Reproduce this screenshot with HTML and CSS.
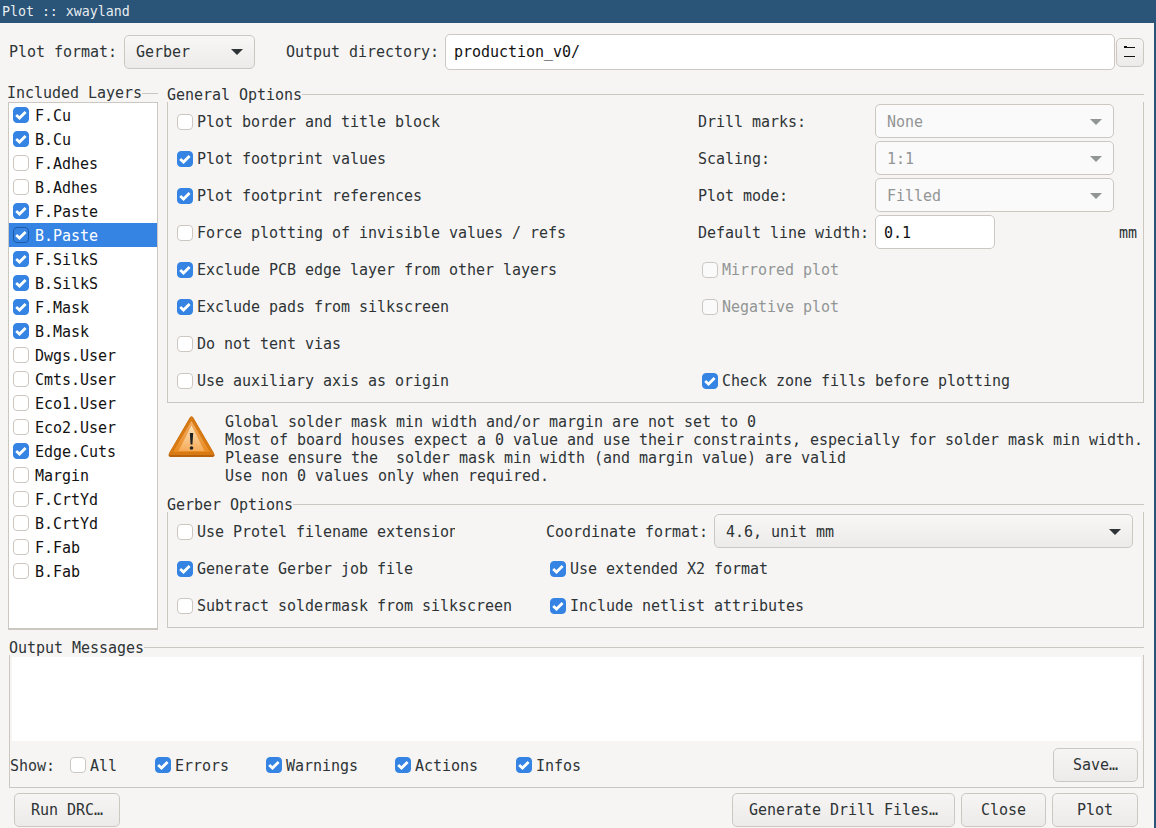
FILE: index.html
```html
<!DOCTYPE html>
<html lang="en">
<head>
    <meta charset="utf-8">
    <title>Plot :: xwayland</title>
    <link rel="stylesheet" href="styles.css">
</head>
<body>
    <div class="window">
        <div class="titlebar">Plot :: xwayland</div>

        <div class="top-row">
            <label>Plot format:</label>
            <div class="combo format-combo"><span>Gerber</span></div>
            <label class="output-label">Output directory:</label>
            <div class="input output-input">production_v0/</div>
            <button class="browse-button" type="button">
                <svg width="14" height="14" viewBox="0 0 14 14">
                    <path d="M1 1.5h3M1 2.5h11M1 11.5h11" fill="none" stroke="#111" stroke-width="1"/>
                </svg>
            </button>
        </div>

        <div class="columns">
            <div class="sidebar">
                <div class="group-title tall">Included Layers</div>
                <div class="layer-list">
                    <label class="layer"><input type="checkbox" checked>F.Cu</label>
                    <label class="layer"><input type="checkbox" checked>B.Cu</label>
                    <label class="layer"><input type="checkbox">F.Adhes</label>
                    <label class="layer"><input type="checkbox">B.Adhes</label>
                    <label class="layer"><input type="checkbox" checked>F.Paste</label>
                    <label class="layer selected"><input type="checkbox" checked>B.Paste</label>
                    <label class="layer"><input type="checkbox" checked>F.SilkS</label>
                    <label class="layer"><input type="checkbox" checked>B.SilkS</label>
                    <label class="layer"><input type="checkbox" checked>F.Mask</label>
                    <label class="layer"><input type="checkbox" checked>B.Mask</label>
                    <label class="layer"><input type="checkbox">Dwgs.User</label>
                    <label class="layer"><input type="checkbox">Cmts.User</label>
                    <label class="layer"><input type="checkbox">Eco1.User</label>
                    <label class="layer"><input type="checkbox">Eco2.User</label>
                    <label class="layer"><input type="checkbox" checked>Edge.Cuts</label>
                    <label class="layer"><input type="checkbox">Margin</label>
                    <label class="layer"><input type="checkbox">F.CrtYd</label>
                    <label class="layer"><input type="checkbox">B.CrtYd</label>
                    <label class="layer"><input type="checkbox">F.Fab</label>
                    <label class="layer"><input type="checkbox">B.Fab</label>
                </div>
            </div>

            <div class="main">
                <div class="group-title">General Options</div>
                <div class="group-body general-grid">
                    <label class="check left"><input type="checkbox">Plot border and title block</label>
                    <label>Drill marks:</label>
                    <div class="combo disabled"><span>None</span></div>
                    <div></div>

                    <label class="check left"><input type="checkbox" checked>Plot footprint values</label>
                    <label>Scaling:</label>
                    <div class="combo disabled"><span>1:1</span></div>
                    <div></div>

                    <label class="check left"><input type="checkbox" checked>Plot footprint references</label>
                    <label>Plot mode:</label>
                    <div class="combo disabled"><span>Filled</span></div>
                    <div></div>

                    <label class="check left"><input type="checkbox">Force plotting of invisible values / refs</label>
                    <label>Default line width:</label>
                    <div class="input width-input">0.1</div>
                    <span class="unit">mm</span>

                    <label class="check left"><input type="checkbox" checked>Exclude PCB edge layer from other layers</label>
                    <label class="check right disabled"><input type="checkbox" disabled>Mirrored plot</label>

                    <label class="check left"><input type="checkbox" checked>Exclude pads from silkscreen</label>
                    <label class="check right disabled"><input type="checkbox" disabled>Negative plot</label>

                    <label class="check left"><input type="checkbox">Do not tent vias</label>

                    <label class="check left"><input type="checkbox">Use auxiliary axis as origin</label>
                    <label class="check right"><input type="checkbox" checked>Check zone fills before plotting</label>
                </div>

                <div class="warning">
                    <svg class="warning-icon" width="47" height="44" viewBox="0 0 47 44">
                        <defs>
                            <linearGradient id="warn-outer" x1="0" y1="0" x2="0" y2="1">
                                <stop offset="0" stop-color="#f3b06a"/>
                                <stop offset="1" stop-color="#e98a1e"/>
                            </linearGradient>
                            <linearGradient id="warn-inner" x1="0" y1="0" x2="0" y2="1">
                                <stop offset="0" stop-color="#fce3bd"/>
                                <stop offset="1" stop-color="#f6ab58"/>
                            </linearGradient>
                        </defs>
                        <path d="M23.5 3 44.5 39.5H2.5Z" fill="#b8620c" stroke="#b8620c" stroke-width="4" stroke-linejoin="round" transform="translate(0 .6)"/>
                        <path d="M23.5 3 44.5 38.5H2.5Z" fill="url(#warn-outer)" stroke="#d87a14" stroke-width="3" stroke-linejoin="round"/>
                        <path d="M23.5 10.5 36.5 36H10.5Z" fill="url(#warn-inner)"/>
                        <path d="M21.8 18h3.4l-.7 11.5h-2Z" fill="#222"/>
                        <circle cx="23.5" cy="33" r="1.8" fill="#222"/>
                    </svg>
                    <div class="warning-text">Global solder mask min width and/or margin are not set to 0
Most of board houses expect a 0 value and use their constraints, especially for solder mask min width.
Please ensure the  solder mask min width (and margin value) are valid
Use non 0 values only when required.</div>
                </div>

                <div class="group-title">Gerber Options</div>
                <div class="group-body gerber-grid">
                    <label class="check left clipped"><input type="checkbox"><span>Use Protel filename extension</span></label>
                    <div class="coord-row">
                        <label>Coordinate format:</label>
                        <div class="combo coord-combo"><span>4.6, unit mm</span></div>
                    </div>
                    <label class="check left"><input type="checkbox" checked>Generate Gerber job file</label>
                    <label class="check right"><input type="checkbox" checked>Use extended X2 format</label>
                    <label class="check left"><input type="checkbox">Subtract soldermask from silkscreen</label>
                    <label class="check right"><input type="checkbox" checked>Include netlist attributes</label>
                </div>
            </div>
        </div>

        <div class="output">
            <div class="group-title">Output Messages</div>
            <div class="group-body output-body">
                <div class="messages"></div>
                <div class="show-row">
                    <label class="show-label">Show:</label>
                    <label class="check show-all"><input type="checkbox">All</label>
                    <label class="check show-errors"><input type="checkbox" checked>Errors</label>
                    <label class="check show-warnings"><input type="checkbox" checked>Warnings</label>
                    <label class="check show-actions"><input type="checkbox" checked>Actions</label>
                    <label class="check"><input type="checkbox" checked>Infos</label>
                    <button class="button save-button" type="button">Save…</button>
                </div>
            </div>
        </div>

        <div class="bottom-row">
            <button class="button drc-button" type="button">Run DRC…</button>
            <button class="button drill-button" type="button">Generate Drill Files…</button>
            <button class="button close-button" type="button">Close</button>
            <button class="button plot-button" type="button">Plot</button>
        </div>
    </div>
</body>
</html>
```

FILE: styles.css
```css
:root {
    --border: #cdc7c2;
    --text: #2e3436;
    --accent: #3584e4;
    --title: #2a5478;
}

* {
    box-sizing: border-box;
}

html {
    color: var(--text);
    font-family: "DejaVu Sans Mono", monospace;
    font-size: 15px;
    /* the reference is hinted to exactly 9px per character */
    letter-spacing: -0.03px;
}

body {
    margin: 0;
    background: #f6f5f4;
}

button {
    font: inherit;
    letter-spacing: inherit;
    color: inherit;
}

.window {
    display: flex;
    flex-direction: column;
    width: 1156px;
    height: 828px;
    overflow: hidden;
    border-right: 2px solid var(--title);
}

.titlebar {
    height: 23px;
    padding-left: 2px;
    background: var(--title);
    color: #e8edf1;
    font-size: 13.3px;
    line-height: 23px;
}

/* --- Top row --- */
.top-row {
    display: flex;
    align-items: center;
    height: 36px;
    margin-top: 11px;
    padding-left: 9px;
}

.format-combo {
    width: 131px;
    margin-left: 7px;
}

.output-label {
    margin-left: 31px;
}

.output-input {
    width: 670px;
    height: 36px;
    margin-left: 6px;
}

.browse-button {
    display: flex;
    justify-content: center;
    align-items: center;
    width: 28px;
    height: 29px;
    margin-left: 1px;
    padding: 0;
    background: linear-gradient(#f6f5f4, #edebe9);
    border: 1px solid var(--border);
    border-radius: 5px;
}

/* --- Controls --- */
.combo {
    display: flex;
    justify-content: space-between;
    align-items: center;
    height: 34px;
    padding: 0 11px;
    background: linear-gradient(#f8f7f6, #edebe9);
    border: 1px solid var(--border);
    border-radius: 5px;
}

.combo::after {
    content: "";
    border-left: 6.5px solid transparent;
    border-right: 6.5px solid transparent;
    border-top: 6.5px solid var(--text);
}

.combo.disabled {
    margin-top: -1px;
    padding-top: 2px;
    background: #fafafa;
    color: #929595;
}

.combo.disabled::after {
    border-top-color: #929595;
}

.input {
    display: flex;
    align-items: center;
    padding-left: 8px;
    background: white;
    border: 1px solid var(--border);
    border-radius: 5px;
    color: #111;
}

.button {
    height: 34px;
    padding: 0;
    background: linear-gradient(#f6f5f4, #edebe9);
    border: 1px solid var(--border);
    border-radius: 5px;
}

.check {
    display: flex;
    align-items: center;
    white-space: nowrap;
}

.check.disabled {
    color: #929595;
}

input[type="checkbox"] {
    appearance: none;
    flex: none;
    width: 16px;
    height: 16px;
    margin: 0 4px 0 0;
    background: white;
    border: 1px solid var(--border);
    border-radius: 4px;
}

input[type="checkbox"]:checked {
    background: var(--accent) url("data:image/svg+xml,%3Csvg xmlns='http://www.w3.org/2000/svg' width='16' height='16'%3E%3Cpath d='M3.2 8 6.5 11 12.6 5' fill='none' stroke='white' stroke-width='2.8'/%3E%3C/svg%3E") center no-repeat;
    border-color: var(--accent);
}

input[type="checkbox"]:disabled {
    background: #fafafa;
}

/* --- Group frames --- */
.group-title {
    display: flex;
    align-items: center;
    height: 16px;
    padding-top: 2px;
    white-space: nowrap;
}

.group-title.tall {
    height: 18px;
    margin-left: -1px;
    padding-top: 0;
}

.group-title::after {
    content: "";
    flex: 1;
    height: 1px;
    margin-top: -2px;
    background: var(--border);
}

.group-title.tall::after {
    margin-top: 0;
}

.group-body {
    border: 1px solid var(--border);
    border-top: 0;
}

/* --- Main columns --- */
.columns {
    display: flex;
    height: 546px;
    margin-top: 14px;
    padding-left: 8px;
}

.sidebar {
    width: 150px;
}

.layer-list {
    height: 528px;
    background: white;
    border: 1px solid var(--border);
    border-width: 1px 1px 2px 1px;
}

.layer {
    display: flex;
    align-items: center;
    height: 24px;
    padding: 2px 0 0 4px;
    color: #111;
}

.layer input[type="checkbox"] {
    margin: -2px 6px 0 0;
}

.layer.selected {
    background: var(--accent);
    color: white;
}

.layer.selected input[type="checkbox"] {
    border-color: #1c5aa6;
}

.main {
    width: 977px;
    margin-left: 9px;
    padding-top: 2px;
}

.general-grid {
    display: grid;
    grid-template-columns: 521px 177px 239px 1fr;
    grid-auto-rows: 37px;
    align-items: center;
    padding: 1px 0 3px 9px;
}

.left {
    grid-column: 1;
}

.right {
    padding-left: 4px;
}

.general-grid .right {
    grid-column: 2 / span 3;
}

.width-input {
    width: 120px;
    height: 34px;
    margin-top: -1px;
    padding-top: 2px;
}

.unit {
    padding-left: 5px;
}

.warning {
    display: flex;
    height: 72px;
    margin: 10px 0 11px;
}

.warning-icon {
    flex: none;
    margin: 2px 10px 0 1px;
}

.warning-text {
    line-height: 18px;
    white-space: pre;
}

.gerber-grid {
    display: grid;
    grid-template-columns: 369px 1fr;
    grid-auto-rows: 37px;
    align-items: center;
    padding: 1px 10px 3px 9px;
}

.clipped span {
    width: 258px;
    overflow: hidden;
}

.coord-row {
    display: flex;
    align-items: center;
}

.coord-combo {
    width: 419px;
    margin-top: -1px;
    margin-left: 6px;
    padding-top: 2px;
}

/* --- Output --- */
.output {
    margin: 9px 10px 0 9px;
}

.output-body {
    padding: 2px 2px 5px 2px;
}

.messages {
    height: 84px;
    background: white;
}

.show-row {
    display: flex;
    align-items: center;
    height: 34px;
    margin-top: 7px;
}

.show-label {
    width: 60px;
    margin-left: -2px;
    padding-top: 2px;
}

.show-row .check {
    padding-top: 2px;
}

.show-row input[type="checkbox"] {
    margin-top: -2px;
}

.show-all {
    width: 85px;
}

.show-errors {
    width: 111px;
}

.show-warnings {
    width: 129px;
}

.show-actions {
    width: 121px;
}

.save-button {
    width: 85px;
    margin-left: auto;
    margin-right: 3px;
}

/* --- Bottom row --- */
.bottom-row {
    display: flex;
    gap: 6px;
    margin-top: 5px;
    padding-left: 14px;
}

.drc-button {
    width: 106px;
    margin-right: auto;
}

.drill-button {
    width: 223px;
}

.close-button {
    width: 85px;
}

.plot-button {
    width: 86px;
    margin-right: 16px;
}
```
